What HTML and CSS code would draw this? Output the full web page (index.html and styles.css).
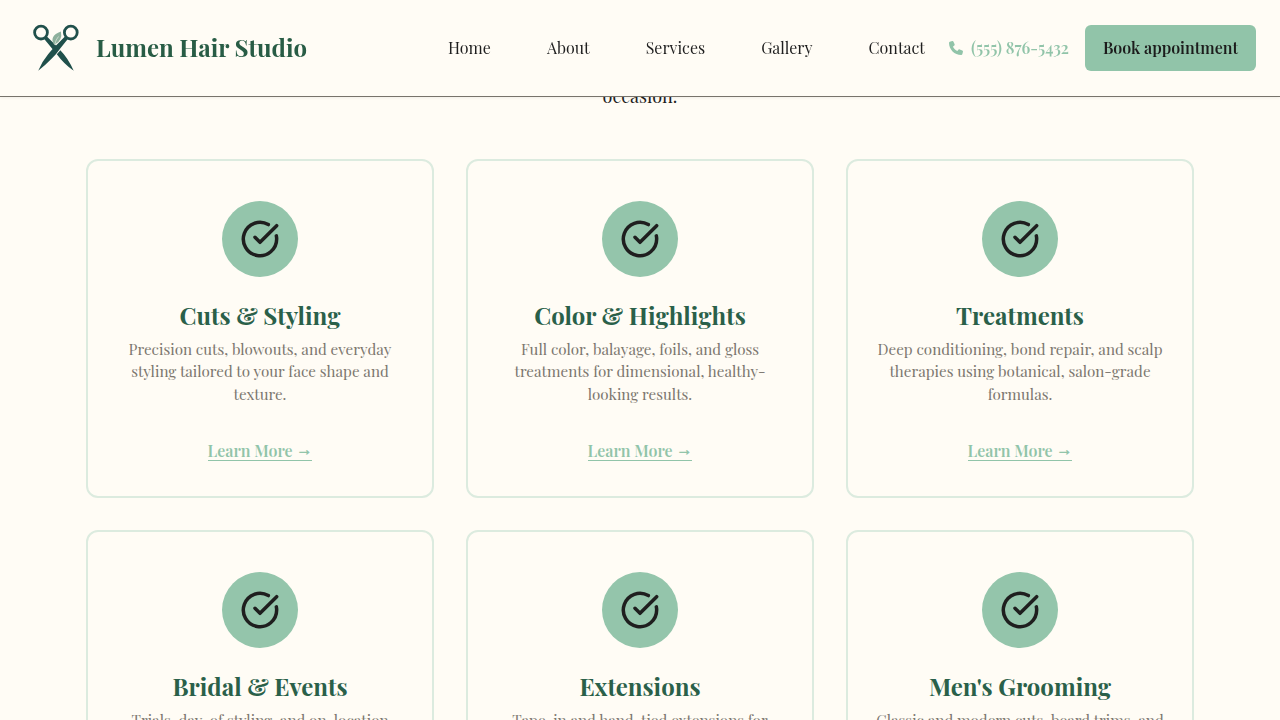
FILE: index.html
```
<!DOCTYPE html>
<html lang="en">
<head>
<meta charset="utf-8">
<title>Lumen Hair Studio</title>
<link rel="stylesheet" href="styles.css">
</head>
<body>
<svg class="sprite" aria-hidden="true">
  <symbol id="check" viewBox="0 0 24 24"><path d="M21.800 10.100Q22 11 22 12a10 10 0 1 1-5-8.660M22 4 12 14.010l-3-3" fill="none" stroke="currentColor" stroke-width="2.1" stroke-linecap="round" stroke-linejoin="round"/></symbol>
</svg>
<header class="header">
  <a class="brand">
    <svg class="logo" viewBox="0 0 48 48">
      <g fill="none" stroke="#20504b" stroke-width="2.8"><circle cx="9" cy="8.600" r="6.400"/><circle cx="38.800" cy="8.600" r="6.400"/></g>
      <path d="M11.800 14.500 14.400 12 26 23.600 22.500 27.400ZM24.800 30.200 28.300 26.300Q36 34 41.700 46.800Q32 40 24.800 30.200Z" fill="#20504b"/>
      <path d="M33.200 12.200 36 14.700 29 23.500Q24.500 30 19.800 34.500Q13 41.500 6.200 46.800Q10 37.500 16.300 30Q20 25.500 24 21.500Z" fill="#20504b"/>
      <path d="M22.300 21Q16.500 12 28.900 7.500Q31 16.500 22.300 21Z" fill="#8db09c"/>
      <path d="M22.800 20.500Q23.800 15.500 26.500 12.500" fill="none" stroke="#fffcf5" stroke-width=".5"/>
    </svg>
    <span class="brand-name">Lumen Hair Studio</span>
  </a>
  <nav class="nav">
    <a>Home</a><a>About</a><a>Services</a><a>Gallery</a><a>Contact</a>
  </nav>
  <a class="phone"><svg class="phone-icon" viewBox="0 0 512 512"><path fill="currentColor" d="M164.900 24.600c-7.700-18.600-28-28.500-47.400-23.200l-88 24C12.100 30.200 0 46 0 64c0 247.400 200.600 448 448 448 18 0 33.800-12.100 38.600-29.500l24-88c5.300-19.400-4.600-39.700-23.200-47.400l-96-40c-16.300-6.800-35.200-2.100-46.300 11.600L304.700 368C234.300 334.700 177.300 277.700 144 207.300l49.300-40.300c13.700-11.200 18.400-30 11.600-46.300l-40-96z"/></svg><span>(555) 876-5432</span></a>
  <a class="book"><span>Book appointment</span></a>
</header>
<main class="services-section">
  <p class="intro">occasion.</p>
  <div class="grid">
    <article class="card">
      <div class="icon"><svg><use href="#check"/></svg></div>
      <h3>Cuts &amp; Styling</h3>
      <p>Precision cuts, blowouts, and everyday<br>styling tailored to your face shape and<br>texture.</p>
      <a class="more">Learn More <span class="arrow">→</span></a>
    </article>
    <article class="card">
      <div class="icon"><svg><use href="#check"/></svg></div>
      <h3>Color &amp; Highlights</h3>
      <p>Full color, balayage, foils, and gloss<br>treatments for dimensional, healthy-<br>looking results.</p>
      <a class="more">Learn More <span class="arrow">→</span></a>
    </article>
    <article class="card">
      <div class="icon"><svg><use href="#check"/></svg></div>
      <h3>Treatments</h3>
      <p>Deep conditioning, bond repair, and scalp<br>therapies using botanical, salon-grade<br>formulas.</p>
      <a class="more">Learn More <span class="arrow">→</span></a>
    </article>
    <article class="card">
      <div class="icon"><svg><use href="#check"/></svg></div>
      <h3>Bridal &amp; Events</h3>
      <p>Trials, day-of styling, and on-location</p>
    </article>
    <article class="card">
      <div class="icon"><svg><use href="#check"/></svg></div>
      <h3>Extensions</h3>
      <p>Tape-in and hand-tied extensions for</p>
    </article>
    <article class="card">
      <div class="icon"><svg><use href="#check"/></svg></div>
      <h3>Men's Grooming</h3>
      <p>Classic and modern cuts, beard trims, and</p>
    </article>
  </div>
</main>
</body>
</html>
```
FILE: styles.css
```
* { box-sizing: border-box; }
html, body { height: 720px; overflow: hidden; }
body { margin: 0; background: #fffcf5; color: #1f1f1f; font-family: "Playfair Display", "Liberation Serif", serif; font-size: 16px; line-height: 1.5; }
.sprite { display: none; }
.header { position: fixed; top: 0; left: 0; z-index: 2; width: 100%; height: 97px; padding: 0 24px 0 32px; display: flex; align-items: center; background: #fffcf5; border-bottom: 1px solid #77736b; box-shadow: 0 1px 3px rgba(0,0,0,.06); }
.brand { display: flex; align-items: center; gap: 16px; width: 416px; }
.logo { width: 48px; height: 48px; }
.brand-name { font-size: 24px; line-height: 32px; padding-bottom: 3px; font-weight: 700; color: #285c45; white-space: nowrap; }
.nav { display: flex; justify-content: space-between; width: 477px; }
.phone { display: flex; align-items: center; gap: 8px; width: 120px; margin-left: 24px; color: #91c4a9; font-weight: 600; white-space: nowrap; }
.phone-icon { width: 14px; height: 14px; flex: none; }
.book { width: 171px; height: 46px; margin-left: 16px; display: flex; align-items: center; justify-content: center; border-radius: 6px; background: #91c4a9; color: #1c1c1c; font-weight: 600; white-space: nowrap; }
.services-section { padding: 83px 86px 0; }
.intro { margin: 0 0 49px; text-align: center; font-size: 18px; line-height: 27px; }
.grid { display: grid; grid-template-columns: repeat(3, minmax(0, 1fr)); gap: 32px; }
.card { height: 339px; padding: 40px 20px 33px; border: 2px solid #dcebdf; border-radius: 12px; display: flex; flex-direction: column; align-items: center; text-align: center; white-space: nowrap; }
.icon { width: 76px; height: 76px; flex: none; border-radius: 50%; background: #94c5ab; display: flex; align-items: center; justify-content: center; color: #1f1f1f; }
.icon svg { width: 40px; height: 40px; }
.card h3 { margin: 21px 0 0; color: #2a6049; font-size: 24px; line-height: 34px; font-weight: 700; }
.card p { margin: 5.5px 0 0; font-size: 15.2px; line-height: 22.6px; color: #7c776f; }
.more { margin-top: 34px; height: 22px; line-height: 24px; color: #91c4a9; font-weight: 600; border-bottom: 1px solid; }
.arrow { font-family: "Liberation Serif", serif; line-height: 1; vertical-align: 2px; -webkit-text-stroke: .5px currentColor; }
```
